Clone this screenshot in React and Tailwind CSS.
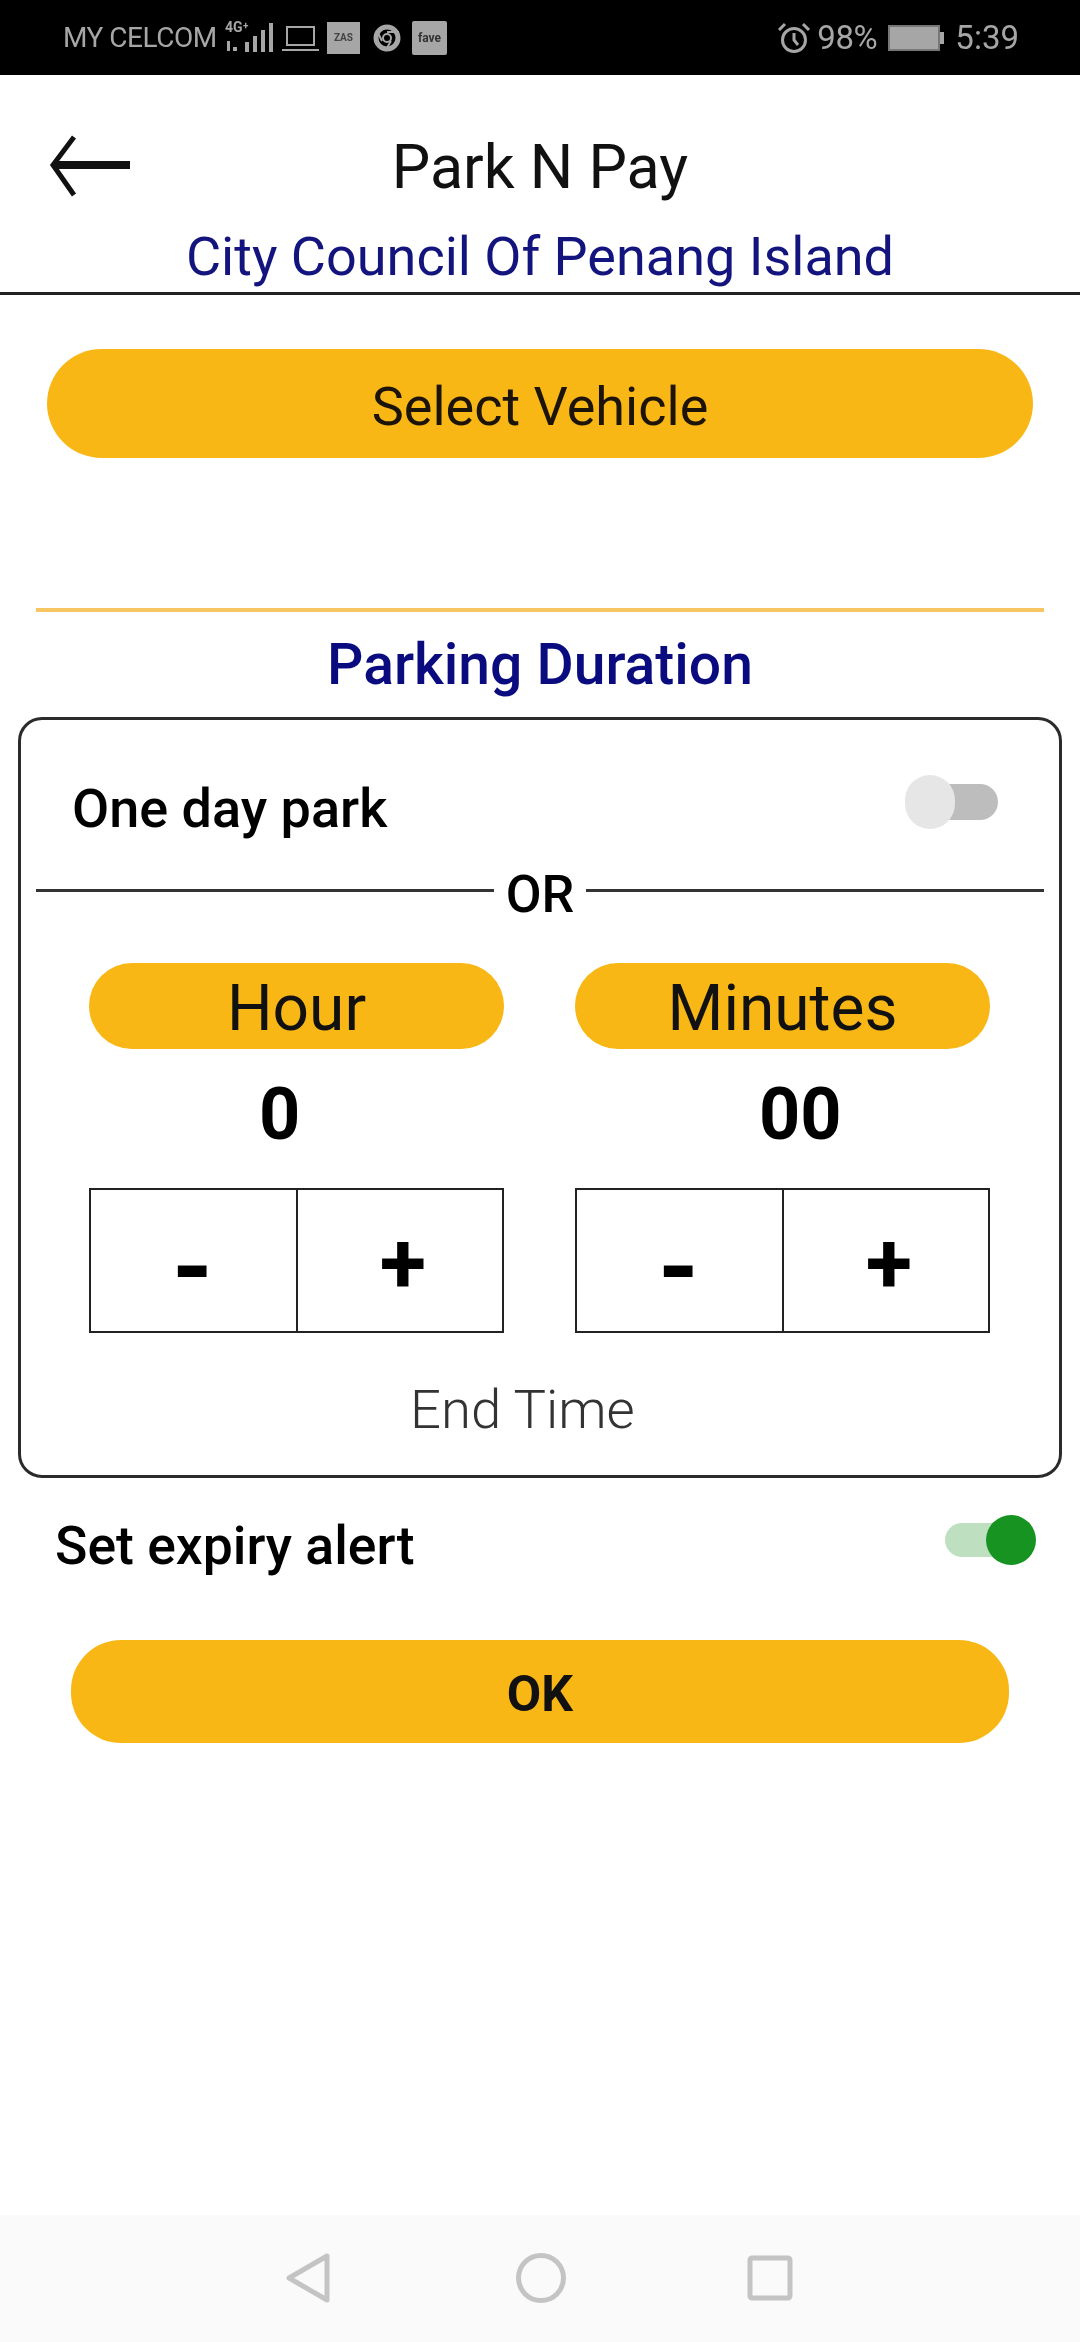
import React from "react";

const roboto = { fontFamily: "Roboto, sans-serif" };

function StatusBar() {
    return (
        <div className="h-[75px] shrink-0 bg-black flex items-center justify-between pl-[63px] pr-[61px] text-[#a6a6a6] blur-[0.7px]">
            <div className="flex items-center">
                <span className="text-[28px] tracking-[-0.5px] leading-none w-[155px] whitespace-nowrap">MY CELCOM</span>
                <svg width="56" height="36" viewBox="0 0 56 36" className="ml-[5px]">
                    <text x="2" y="12" fontSize="14" fontWeight="700" fill="#a6a6a6">4G</text>
                    <text x="20" y="9" fontSize="10" fontWeight="700" fill="#a6a6a6">+</text>
                    <rect x="4" y="21" width="3" height="10" fill="#a6a6a6" />
                    <rect x="10" y="27" width="4" height="4" fill="#a6a6a6" />
                    <rect x="22" y="22" width="4" height="10" fill="#a6a6a6" />
                    <rect x="30" y="16" width="4" height="16" fill="#a6a6a6" />
                    <rect x="38" y="10" width="4" height="22" fill="#a6a6a6" />
                    <rect x="46" y="3" width="4" height="29" fill="#a6a6a6" />
                </svg>
                <svg width="38" height="28" viewBox="0 0 38 28" className="ml-[3px]" fill="none" stroke="#a6a6a6" strokeWidth="2">
                    <rect x="5" y="3" width="27" height="18" />
                    <path d="M0 26h37" />
                </svg>
                <div className="ml-[7px] w-[33px] h-[32px] bg-[#a6a6a6] flex items-center justify-center text-[10px] font-bold text-[#444]">ZAS</div>
                <svg width="30" height="30" viewBox="0 0 30 30" className="ml-[12px]" fill="none" stroke="#a6a6a6">
                    <circle cx="15" cy="15" r="11" strokeWidth="5" />
                    <circle cx="15" cy="15" r="4" strokeWidth="2" />
                    <path d="M15 9h12M10 18 5 8M19 18l-6 10" strokeWidth="2" />
                </svg>
                <div className="ml-[10px] w-[35px] h-[34px] rounded-[2px] bg-[#a6a6a6] flex items-center justify-center text-[12px] font-bold text-[#333]">fave</div>
            </div>
            <div className="flex items-center">
                <svg width="34" height="32" viewBox="0 0 34 32" fill="none" stroke="#a6a6a6" strokeWidth="3">
                    <circle cx="17" cy="18" r="11.5" />
                    <path d="M17 11v7l4 5M2 8l6-6M32 8l-6-6" />
                </svg>
                <span className="ml-[6px] text-[33px] leading-none w-[62px] tracking-[-0.5px]">98%</span>
                <div className="ml-[9px] flex items-center">
                    <div className="w-[52px] h-[26px] bg-[#a6a6a6] border-2 border-[#777]" />
                    <div className="w-[4px] h-[12px] bg-[#a6a6a6]" />
                </div>
                <span className="ml-[11px] text-[33px] leading-none">5:39</span>
            </div>
        </div>
    );
}

function Toggle({ on }) {
    if (on) {
        return (
            <div className="relative w-[90px] h-[34px] rounded-full bg-[#bfe0c0]">
                <div className="absolute -right-px -top-2 w-[50px] h-[50px] rounded-full bg-[#179321]" />
            </div>
        );
    }
    return (
        <div className="relative w-[92px] h-[36px] rounded-full bg-[#bdbdbd]">
            <div className="absolute -left-px -top-[9px] w-[50px] h-[54px] rounded-full bg-[#e6e6e6]" />
        </div>
    );
}

function Counter({ label, value, valueClass }) {
    return (
        <div className="w-[415px]">
            <div className="h-[86px] pt-[6px] rounded-[43px] bg-[#f9b715] flex items-center justify-center text-[64px] text-[#111] leading-none">
                {label}
            </div>
            <div className={`h-[139px] pb-[8px] flex items-center text-[72px] font-bold text-black leading-none ${valueClass}`}>
                {value}
            </div>
            <div className="h-[145px] border-2 border-[#222] flex text-black font-bold leading-none">
                <div className="w-[207px] border-r-2 border-[#222] flex items-center justify-center text-[104px] pr-[2px] pt-[14px]">-</div>
                <div className="flex-1 flex items-center justify-center text-[85px] pl-[6px] pt-[5px]">+</div>
            </div>
        </div>
    );
}

export default function App() {
    return (
        <div className="w-[1080px] h-[2342px] bg-white flex flex-col overflow-hidden" style={roboto}>
            <StatusBar />

            <div className="h-[220px] shrink-0 border-b-[3px] border-[#222] relative flex flex-col items-center">
                <svg width="84" height="64" viewBox="0 0 84 64" className="absolute left-[48px] top-[59px]" fill="none" stroke="#111" strokeWidth="8">
                    <path d="M82 31H6" />
                    <path d="M26 3 5 31l21 30" strokeWidth="5" />
                </svg>
                <div className="mt-[59px] text-[61px] leading-[66px] text-[#111] whitespace-nowrap">Park N Pay</div>
                <div className="mt-[26px] text-[54px] leading-[62px] text-[#14147e] whitespace-nowrap">City Council Of Penang Island</div>
            </div>

            <div className="mx-[47px] mt-[54px] h-[109px] pt-[6px] rounded-[55px] bg-[#f9b715] flex items-center justify-center text-[54px] text-[#1c1408] leading-none">
                Select Vehicle
            </div>

            <div className="mx-[36px] mt-[150px] h-[4px] bg-[#f7c562]" />

            <div className="mt-[12px] h-[80px] flex items-center justify-center text-[57px] font-medium text-[#0b0b80] leading-none">
                Parking Duration
            </div>

            <div className="mx-[18px] mt-[13px] h-[761px] border-[3px] border-[#2b2b2b] rounded-[24px] flex flex-col">
                <div className="h-[88px] mt-[42px] pl-[51px] pr-[61px] flex items-center justify-between text-[54px] font-medium text-black leading-none">
                    <span className="pt-[6px]">One day park</span>
                    <span className="-mt-[8px]"><Toggle /></span>
                </div>
                <div className="mx-[15px] mt-[10px] h-[60px] flex items-center">
                    <div className="flex-1 h-[3px] bg-[#333]" />
                    <span className="mx-[12px] text-[52px] font-medium text-black leading-none pt-[10px]">OR</span>
                    <div className="flex-1 h-[3px] bg-[#333]" />
                </div>
                <div className="mt-[43px] pl-[68px] pr-[69px] flex justify-between">
                    <Counter label="Hour" value="0" valueClass="pl-[170px]" />
                    <Counter label="Minutes" value="00" valueClass="pl-[184px]" />
                </div>
                <div className="mt-[49px] pl-[389px] text-[54.5px] font-light text-[#333] leading-none">End Time</div>
            </div>

            <div className="mt-[35px] pl-[55px] pr-[45px] h-[66px] flex items-center justify-between text-[53.5px] font-medium text-black leading-none">
                <span>Set expiry alert</span>
                <span className="-mt-[12px]"><Toggle on /></span>
            </div>

            <div className="mx-[71px] mt-[61px] h-[103px] pt-[4px] rounded-[50px] bg-[#f9b715] flex items-center justify-center text-[50px] font-bold text-[#111] leading-none">
                OK
            </div>

            <div className="mt-auto h-[127px] bg-[#fafafa] flex items-center justify-center pb-[2px] pr-[1px]">
                <svg width="44" height="50" viewBox="0 0 44 50" fill="none" stroke="#c4c4c4" strokeWidth="5" strokeLinejoin="round">
                    <path d="M41 3v44L3 25z" />
                </svg>
                <svg width="50" height="50" viewBox="0 0 50 50" className="ml-[186px]" fill="none" stroke="#c4c4c4" strokeWidth="5">
                    <circle cx="25" cy="25" r="22.5" />
                </svg>
                <svg width="46" height="46" viewBox="0 0 46 46" className="ml-[181px]" fill="none" stroke="#c4c4c4" strokeWidth="5" strokeLinejoin="round">
                    <rect x="3" y="3" width="40" height="40" rx="2" />
                </svg>
            </div>
        </div>
    );
}
